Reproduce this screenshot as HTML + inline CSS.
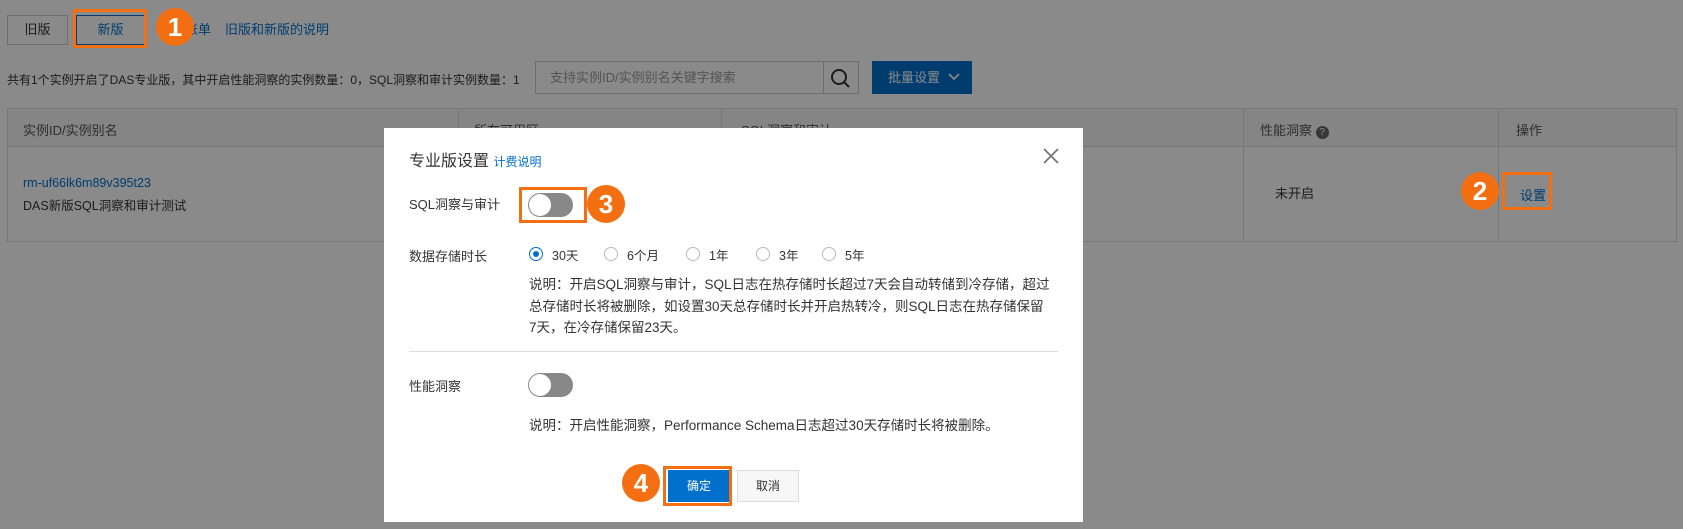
<!DOCTYPE html>
<html><head><meta charset="utf-8">
<style>
*{box-sizing:border-box;margin:0;padding:0}
body{width:1683px;height:529px;overflow:hidden;background:#fff;font-family:"Liberation Sans","Noto Sans CJK SC",sans-serif;font-size:13px;color:#333;position:relative}
.a{position:absolute;white-space:nowrap}
.link{color:#0070cc}
.ov{position:absolute;left:0;top:0;width:1683px;height:529px;background:rgba(0,0,0,0.46)}
.circ{position:absolute;width:38px;height:38px;border-radius:50%;background:#f36f12;color:#fff;font-size:26px;text-align:center;line-height:38px;font-weight:bold;z-index:5}
.ob{position:absolute;border:3px solid #f36f12;z-index:4}
.tog{position:absolute;width:45px;height:24px;border-radius:12px;background:#888}
.tog::after{content:"";position:absolute;left:1px;top:1px;width:22px;height:22px;border-radius:50%;background:#fff}
.rad{position:absolute;width:14px;height:14px;border-radius:50%;border:1px solid #bbb;background:#fff}
.rad.on{border-color:#0070cc}
.rad.on::after{content:"";position:absolute;left:3px;top:3px;width:6px;height:6px;border-radius:50%;background:#0070cc}
.cell{position:absolute;border-right:1px solid #ddd}
</style></head><body>
<div class="a" style="left:7px;top:15px;width:61px;height:30px;border:1px solid #ccc;text-align:center;line-height:28px">旧版</div>
<div class="a" style="left:76px;top:15px;width:69px;height:30px;border:1px solid #0070cc;color:#0070cc;text-align:center;line-height:28px">新版</div>
<div class="a link" style="left:185px;top:19px">账单</div>
<div class="a link" style="left:225px;top:19px">旧版和新版的说明</div>
<div class="a" style="left:7px;top:71px;font-size:12px">共有1个实例开启了DAS专业版，其中开启性能洞察的实例数量：0，SQL洞察和审计实例数量：1</div>
<div class="a" style="left:535px;top:61px;width:289px;height:33px;border:1px solid #ccc;color:#999;padding-left:14px;line-height:31px">支持实例ID/实例别名关键字搜索</div>
<div class="a" style="left:823px;top:61px;width:36px;height:33px;border:1px solid #ccc;border-left:none">
<svg width="36" height="33"><circle cx="16" cy="15" r="7" fill="none" stroke="#333" stroke-width="2"/><line x1="21" y1="20" x2="26" y2="25" stroke="#333" stroke-width="2"/></svg></div>
<div class="a" style="left:872px;top:61px;width:100px;height:33px;background:#0070cc;color:#fff;line-height:33px;padding-left:16px">批量设置 <svg width="12" height="10" style="margin-left:4px"><path d="M1 2 L6 7 L11 2" fill="none" stroke="#fff" stroke-width="1.6"/></svg></div>
<div class="a" style="left:7px;top:108px;width:1670px;height:134px;border:1px solid #ddd">
 <div style="position:absolute;left:0;top:0;width:100%;height:38px;background:#f5f5f5;border-bottom:1px solid #ddd"></div>
 <div class="cell" style="left:0;top:0;width:451px;height:132px"></div>
 <div class="cell" style="left:451px;top:0;width:263px;height:132px"></div>
 <div class="cell" style="left:714px;top:0;width:522px;height:132px"></div>
 <div class="cell" style="left:1236px;top:0;width:255px;height:132px"></div>
 <div class="a" style="left:15px;top:11px;color:#555">实例ID/实例别名</div>
 <div class="a" style="left:466px;top:11px;color:#555">所在可用区</div>
 <div class="a" style="left:733px;top:11px;color:#555">SQL洞察和审计</div>
 <div class="a" style="left:1252px;top:11px;color:#555">性能洞察 <span style="display:inline-block;width:13px;height:13px;border-radius:50%;background:#666;color:#fff;font-size:10px;text-align:center;line-height:13px">?</span></div>
 <div class="a" style="left:1508px;top:11px;color:#555">操作</div>
 <div class="a link" style="left:15px;top:67px;font-size:12.5px">rm-uf66lk6m89v395t23</div>
 <div class="a" style="left:15px;top:86px;font-size:12.5px">DAS新版SQL洞察和审计测试</div>
 <div class="a" style="left:1267px;top:74px">未开启</div>
 <div class="a link" style="left:1512px;top:76px">设置</div>
</div>
<div class="ov"></div>
<div class="ob" style="left:73px;top:9px;width:74px;height:39px"></div>
<div class="circ" style="left:156px;top:8px">1</div>
<div class="ob" style="left:1502px;top:172px;width:50px;height:38px"></div>
<div class="circ" style="left:1461px;top:172px">2</div>
<div class="a" style="left:384px;top:128px;width:699px;height:394px;background:#fff">
 <div class="a" style="left:25px;top:19px;font-size:16px;color:#333">专业版设置 <span class="link" style="font-size:12px">计费说明</span></div>
 <svg class="a" style="left:658px;top:19px" width="18" height="18"><path d="M2 2L16 16M16 2L2 16" stroke="#777" stroke-width="1.8"/></svg>
 <div class="a" style="left:25px;top:66px">SQL洞察与审计</div>
 <div class="tog" style="left:144px;top:65px"></div>
 <div class="a" style="left:25px;top:118px">数据存储时长</div>
 <div class="rad on" style="left:145px;top:119px"></div><div class="a" style="left:168px;top:117px;font-size:12.5px">30天</div>
 <div class="rad" style="left:220px;top:119px"></div><div class="a" style="left:243px;top:117px;font-size:12.5px">6个月</div>
 <div class="rad" style="left:302px;top:119px"></div><div class="a" style="left:325px;top:117px;font-size:12.5px">1年</div>
 <div class="rad" style="left:372px;top:119px"></div><div class="a" style="left:395px;top:117px;font-size:12.5px">3年</div>
 <div class="rad" style="left:438px;top:119px"></div><div class="a" style="left:461px;top:117px;font-size:12.5px">5年</div>
 <div class="a" style="left:145px;top:146px;width:522px;white-space:normal;line-height:21.5px;font-size:13.5px">说明：开启SQL洞察与审计，SQL日志在热存储时长超过7天会自动转储到冷存储，超过总存储时长将被删除，如设置30天总存储时长并开启热转冷，则SQL日志在热存储保留7天，在冷存储保留23天。</div>
 <div class="a" style="left:25px;top:223px;width:649px;height:1px;background:#ddd"></div>
 <div class="a" style="left:25px;top:248px">性能洞察</div>
 <div class="tog" style="left:144px;top:245px"></div>
 <div class="a" style="left:145px;top:286px;font-size:13.5px">说明：开启性能洞察，Performance Schema日志超过30天存储时长将被删除。</div>
 <div class="a" style="left:284px;top:342px;width:62px;height:32px;background:#0070cc;color:#fff;text-align:center;line-height:32px;font-size:12px">确定</div>
 <div class="a" style="left:353px;top:342px;width:62px;height:32px;border:1px solid #ddd;background:#f7f7f7;text-align:center;line-height:30px;font-size:12px">取消</div>
</div>
<div class="ob" style="left:519px;top:187px;width:68px;height:36px"></div>
<div class="circ" style="left:587px;top:185px">3</div>
<div class="ob" style="left:663px;top:466px;width:69px;height:40px"></div>
<div class="circ" style="left:622px;top:464px">4</div>
</body></html>
